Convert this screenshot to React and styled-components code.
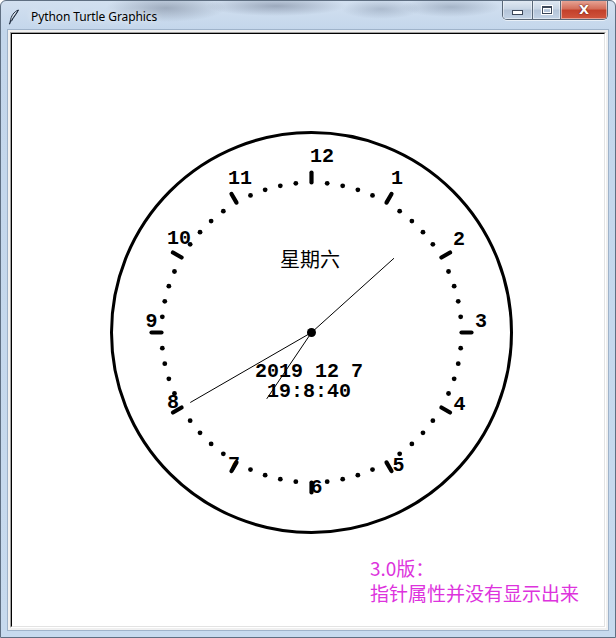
import styled, { createGlobalStyle } from 'styled-components'

const GlobalStyle = createGlobalStyle`
    html, body {
        margin: 0;
        padding: 0;
        background: #fff;
        overflow: hidden;
    }
`;

const Window = styled.div`
    width: 616px;
    height: 638px;
    box-sizing: border-box;
    display: flex;
    flex-direction: column;
    border: 1px solid #5f6f82;
    border-radius: 6px 6px 0 0;
    background:
        radial-gradient(ellipse 60px 14px at 165px 7px, rgba(70, 80, 100, 0.35), transparent),
        radial-gradient(ellipse 70px 10px at 275px 5px, rgba(60, 70, 95, 0.35), transparent),
        radial-gradient(ellipse 40px 10px at 380px 8px, rgba(70, 85, 110, 0.25), transparent),
        radial-gradient(ellipse 50px 10px at 450px 6px, rgba(70, 85, 110, 0.3), transparent),
        linear-gradient(to bottom, #d2e0f0 0px, #c3d6eb 30px, #c7daee 100%);
    font-family: "Noto Sans", "Liberation Sans", sans-serif;
    overflow: hidden;
`;

const TitleBar = styled.div`
    height: 29px;
    flex: none;
    display: flex;
    align-items: flex-start;
    justify-content: space-between;
`;

const TitleLeft = styled.div`
    display: flex;
    align-items: center;
    gap: 11px;
    padding: 7px 0 0 7px;
`;

const Title = styled.span`
    font-size: 12px;
    color: #000;
    text-shadow: 0 0 6px rgba(255, 255, 255, 0.9);
    letter-spacing: -0.1px;
`;

const Caption = styled.div`
    display: flex;
    margin-right: 7px;
    margin-top: -1px;
    border: 1px solid #5a6878;
    border-top: none;
    border-radius: 0 0 5px 5px;
    overflow: hidden;
    box-shadow: 0 1px 0 rgba(255, 255, 255, 0.6);
`;

const CapButton = styled.div`
    width: ${p => p.$w}px;
    height: 19px;
    display: flex;
    align-items: center;
    justify-content: center;
    border-left: ${p => p.$first ? 'none' : '1px solid #5a6878'};
    box-shadow: inset 0 0 0 1px rgba(255, 255, 255, 0.45);
    background: ${p => p.$close
        ? 'linear-gradient(to bottom, #e9a99b 0%, #d4705c 45%, #c3412b 55%, #d1553d 100%)'
        : 'linear-gradient(to bottom, #e3ebf4 0%, #c9d6e5 45%, #b4c4d8 55%, #c3d3e5 100%)'};
`;

const MinGlyph = styled.div`
    width: 9px;
    height: 3px;
    margin-top: 6px;
    background: #fff;
    border: 1px solid #3b4658;
`;

const MaxGlyph = styled.div`
    width: 8px;
    height: 5px;
    border: 1px solid #3b4658;
    border-top-width: 2px;
    background: transparent;
    box-shadow: inset 0 0 0 1px #fff, 0 0 0 1px #fff;
`;

const CloseGlyph = styled.span`
    color: #fff;
    font-family: "DejaVu Sans", sans-serif;
    font-weight: bold;
    font-size: 13px;
    line-height: 1;
    text-shadow: 0 0 1px #6b1a10, 0 0 2px #6b1a10;
`;

const Client = styled.div`
    flex: 1;
    margin: 0 7px 7px 7px;
    padding: 2px;
    background: #f0f0f0;
    box-shadow: 0 0 0 1px #9fb3ca;
    display: flex;
`;

const SunkenOuter = styled.div`
    flex: 1;
    display: flex;
    border-style: solid;
    border-width: 1px;
    border-color: #a0a0a0 #ffffff #ffffff #a0a0a0;
`;

const SunkenInner = styled.div`
    flex: 1;
    display: flex;
    border-style: solid;
    border-width: 1px;
    border-color: #000 #e3e3e3 #e3e3e3 #000;
    background: #fff;
`;

const Canvas = styled.svg`
    display: block;
    width: 100%;
    height: 100%;
`;

const Num = styled.text`
    font-family: "Liberation Mono", "Courier New", monospace;
    font-weight: bold;
    font-size: 20px;
    fill: #000;
`;

const Cjk = styled.text`
    font-family: "Noto Sans CJK SC", sans-serif;
    font-size: ${p => p.$size}px;
    fill: ${p => p.$color || '#000'};
`;

const CX = 311.5;
const CY = 332.5;

const labels = [
    ['12', 322, 162], ['1', 397, 183.5], ['2', 459, 245], ['3', 481, 327],
    ['4', 459.5, 409.5], ['5', 398.5, 471], ['6', 316.5, 493], ['7', 234, 470],
    ['8', 173, 408], ['9', 151.5, 326.5], ['10', 179, 243.5], ['11', 240, 183.5],
];

const polar = (deg, r) => {
    const a = deg * Math.PI / 180;
    return [CX + r * Math.sin(a), CY - r * Math.cos(a)];
};

const Feather = () => (
    <svg width="12" height="16" viewBox="0 0 12 16">
        <path d="M10.5 1 C6 2.5 3 7 2.2 12.5 L3.6 12 C5 9 8.5 5 10.5 1 Z" fill="#dfe8f2" stroke="#1d2a3c" strokeWidth="1" />
        <path d="M2.6 12.3 L1.4 15.2" stroke="#1d2a3c" strokeWidth="1.2" />
        <path d="M9.5 2.5 L3.2 11.5" stroke="#1d2a3c" strokeWidth="0.7" />
    </svg>
);

const Clock = () => {
    const marks = [];
    for (let m = 0; m < 60; m++) {
        const deg = m * 6;
        if (m % 5 === 0) {
            const [x1, y1] = polar(deg, 150);
            const [x2, y2] = polar(deg, 160);
            marks.push(<line key={m} x1={x1} y1={y1} x2={x2} y2={y2} stroke="#000" strokeWidth="4.2" strokeLinecap="round" />);
        } else {
            const [x, y] = polar(deg, 150);
            marks.push(<circle key={m} cx={x} cy={y} r="2.4" fill="#000" />);
        }
    }
    const hands = [[48, 111], [240, 140], [214, 80]];

    return (
        <Canvas viewBox="12 34 592 592" preserveAspectRatio="xMinYMin meet">
            <circle cx={CX} cy={CY} r="200" fill="none" stroke="#000" strokeWidth="3" />
            {labels.map(([t, x, y]) => (
                <Num key={t} x={x} y={y} textAnchor="middle">{t}</Num>
            ))}
            {marks}
            {hands.map(([deg, r]) => {
                const [x, y] = polar(deg, r);
                return <line key={deg} x1={CX} y1={CY} x2={x} y2={y} stroke="#000" strokeWidth="1" />;
            })}
            <circle cx={CX} cy={CY} r="4.5" fill="#000" />
            <Cjk $size={20} x="310" y="267" textAnchor="middle">星期六</Cjk>
            <Num x="309" y="377" textAnchor="middle">2019 12 7</Num>
            <Num x="309" y="397" textAnchor="middle">19:8:40</Num>
            <Cjk $size={19} $color="#dd33dd" x="370" y="576">3.0版：</Cjk>
            <Cjk $size={19} $color="#dd33dd" x="370" y="601">指针属性并没有显示出来</Cjk>
        </Canvas>
    );
};

const App = () => (
    <>
        <GlobalStyle />
        <Window>
            <TitleBar>
                <TitleLeft>
                    <Feather />
                    <Title>Python Turtle Graphics</Title>
                </TitleLeft>
                <Caption>
                    <CapButton $w={29} $first><MinGlyph /></CapButton>
                    <CapButton $w={27}><MaxGlyph /></CapButton>
                    <CapButton $w={46} $close><CloseGlyph>X</CloseGlyph></CapButton>
                </Caption>
            </TitleBar>
            <Client>
                <SunkenOuter>
                    <SunkenInner>
                        <Clock />
                    </SunkenInner>
                </SunkenOuter>
            </Client>
        </Window>
    </>
);

export default App;
